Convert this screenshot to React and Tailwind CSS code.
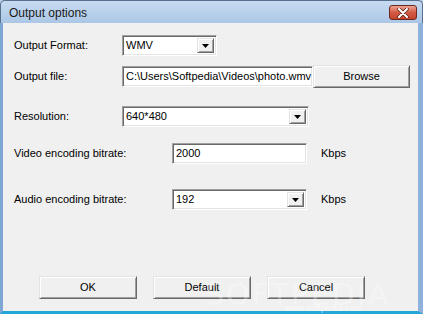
import React from 'react';

const sunken =
  'border border-t-[#a0a0a0] border-l-[#a0a0a0] border-b-white border-r-white shadow-[inset_1px_1px_0_#696969,inset_-1px_-1px_0_#e3e3e3] bg-white';
const raised =
  'border border-t-[#e3e3e3] border-l-[#e3e3e3] border-b-[#696969] border-r-[#696969] shadow-[inset_1px_1px_0_#ffffff,inset_-1px_-1px_0_#a0a0a0] bg-[#f0f0f0]';

const ComboBox = ({ value, width }) => (
  <div className={`${sunken} flex items-stretch h-[21px] p-[2px] ${width}`}>
    <span className="flex-1 pl-[1px] leading-[15px] overflow-hidden whitespace-nowrap">{value}</span>
    <div className={`${raised} w-[17px] flex items-center justify-center`}>
      <svg width="7" height="4" viewBox="0 0 7 4">
        <path d="M0 0h7L3.5 4z" fill="#000" />
      </svg>
    </div>
  </div>
);

const TextBox = ({ value, width }) => (
  <div className={`${sunken} h-[21px] px-[3px] flex items-center overflow-hidden whitespace-nowrap ${width}`}>
    {value}
  </div>
);

const Button = ({ children, width = 'w-[98px]' }) => (
  <div className={`${raised} h-[23px] flex items-center justify-center ${width}`}>{children}</div>
);

export default function App() {
  return (
    <div className="w-[423px] h-[314px] flex flex-col bg-[#b9d1ea] text-black text-[11px] font-['Liberation_Sans',Arial,sans-serif] relative overflow-hidden">
      {/* Title bar */}
      <div className="h-[23px] flex items-center justify-between pl-[8px] pr-[5px] bg-gradient-to-b from-[#c7dbf0] to-[#abc7e5] border-t border-x border-[#556f8c] rounded-t-[5px]">
        <span className="text-[12px] text-[#1a1a1a] pt-[2px]">Output options</span>
        <div className="w-[28px] h-[15px] mt-[1px] rounded-[3px] border border-[#6e2a22] bg-gradient-to-b from-[#eba393] via-[#d25a44] to-[#c4432d] flex items-center justify-center">
          <svg width="12" height="10" viewBox="0 0 12 10">
            <path d="M2 1l8 8M10 1l-8 8" stroke="#5a231c" strokeWidth="3.4" strokeLinecap="round" />
            <path d="M2 1l8 8M10 1l-8 8" stroke="#ffffff" strokeWidth="2" strokeLinecap="round" />
          </svg>
        </div>
      </div>

      {/* Body */}
      <div className="flex-1 flex border-l-[3px] border-l-[#7fa6d4] border-r-[5px] border-r-[#8fb2dc] border-b-[3px] border-b-[#25a6d9]">
        <div className="flex-1 bg-[#f0f0f0] pl-[11px] flex flex-col">
          <div className="mt-[12px] h-[21px] flex items-center">
            <span className="w-[108px]">Output Format:</span>
            <ComboBox value="WMV" width="w-[95px]" />
          </div>

          <div className="mt-[9px] h-[23px] flex items-center">
            <span className="w-[108px]">Output file:</span>
            <TextBox value="C:\Users\Softpedia\Videos\photo.wmv" width="w-[191px]" />
            <Button width="w-[97px]">Browse</Button>
          </div>

          <div className="mt-[18px] h-[21px] flex items-center">
            <span className="w-[108px]">Resolution:</span>
            <ComboBox value="640*480" width="w-[187px]" />
          </div>

          <div className="mt-[16px] h-[21px] flex items-center">
            <span className="w-[158px]">Video encoding bitrate:</span>
            <TextBox value="2000" width="w-[135px]" />
            <span className="ml-[14px]">Kbps</span>
          </div>

          <div className="mt-[25px] h-[21px] flex items-center">
            <span className="w-[158px]">Audio encoding bitrate:</span>
            <ComboBox value="192" width="w-[135px]" />
            <span className="ml-[14px]">Kbps</span>
          </div>

          <div className="mt-[66px] ml-[25px] flex gap-[16px]">
            <Button>OK</Button>
            <Button>Default</Button>
            <Button>Cancel</Button>
          </div>
        </div>
      </div>

      {/* Watermark */}
      <span className="absolute left-[205px] top-[272px] text-[30px] tracking-[2px] text-white/30 font-['DejaVu_Sans',sans-serif] pointer-events-none">
        SOFTPEDIA
      </span>
      <span className="absolute left-[285px] top-[303px] text-[9px] leading-[10px] text-white/60 pointer-events-none">
        www.softpedia.com
      </span>
    </div>
  );
}
